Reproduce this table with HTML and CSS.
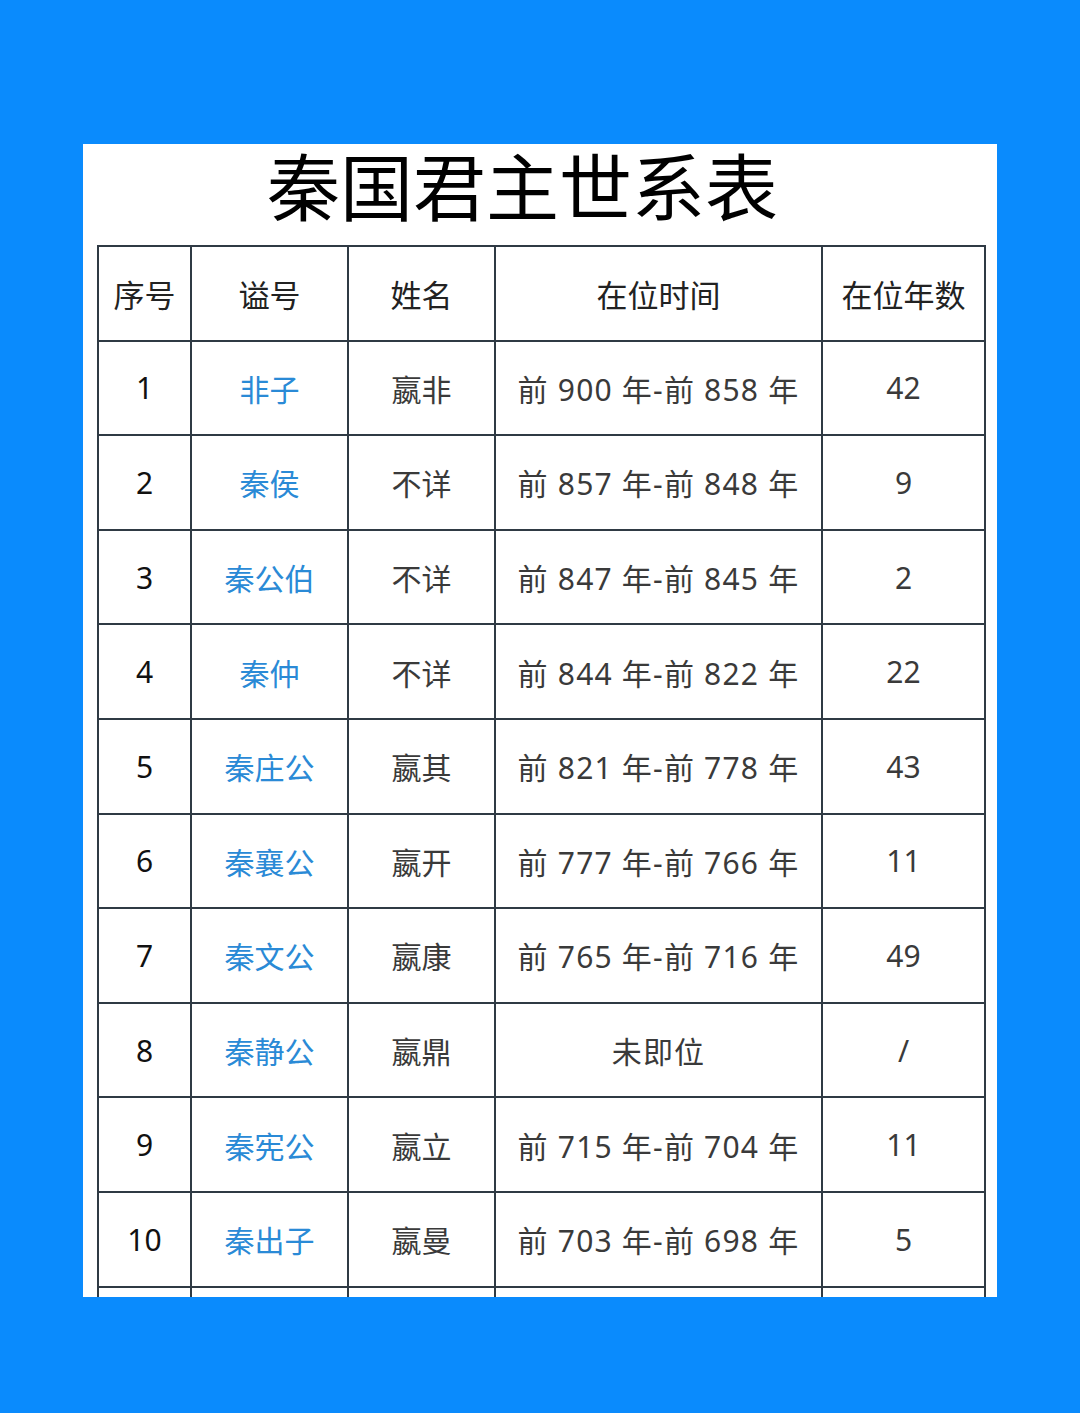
FILE: index.html
```html
<!DOCTYPE html>
<html lang="zh">
<head>
<meta charset="utf-8">
<link rel="stylesheet" href="styles.css">
</head>
<body>
<div class="panel">
  <h1 class="title">秦国君主世系表</h1>
  <table class="kings">
    <colgroup>
      <col class="c1"><col class="c2"><col class="c3"><col class="c4"><col class="c5">
    </colgroup>
    <thead>
      <tr><th>序号</th><th>谥号</th><th>姓名</th><th>在位时间</th><th>在位年数</th></tr>
    </thead>
    <tbody>
      <tr><td class="num">1</td><td class="link">非子</td><td>嬴非</td><td class="date">前 900 年-前 858 年</td><td>42</td></tr>
      <tr><td class="num">2</td><td class="link">秦侯</td><td>不详</td><td class="date">前 857 年-前 848 年</td><td>9</td></tr>
      <tr><td class="num">3</td><td class="link">秦公伯</td><td>不详</td><td class="date">前 847 年-前 845 年</td><td>2</td></tr>
      <tr><td class="num">4</td><td class="link">秦仲</td><td>不详</td><td class="date">前 844 年-前 822 年</td><td>22</td></tr>
      <tr><td class="num">5</td><td class="link">秦庄公</td><td>嬴其</td><td class="date">前 821 年-前 778 年</td><td>43</td></tr>
      <tr><td class="num">6</td><td class="link">秦襄公</td><td>嬴开</td><td class="date">前 777 年-前 766 年</td><td>11</td></tr>
      <tr><td class="num">7</td><td class="link">秦文公</td><td>嬴康</td><td class="date">前 765 年-前 716 年</td><td>49</td></tr>
      <tr><td class="num">8</td><td class="link">秦静公</td><td>嬴鼎</td><td class="date">未即位</td><td>/</td></tr>
      <tr><td class="num">9</td><td class="link">秦宪公</td><td>嬴立</td><td class="date">前 715 年-前 704 年</td><td>11</td></tr>
      <tr><td class="num">10</td><td class="link">秦出子</td><td>嬴曼</td><td class="date">前 703 年-前 698 年</td><td>5</td></tr>
      <tr><td></td><td></td><td></td><td></td><td></td></tr>
    </tbody>
  </table>
</div>
</body>
</html>
```
FILE: styles.css
```css
html, body {
  margin: 0;
  padding: 0;
}
body {
  background: #0a8bfd;
  width: 1080px;
  height: 1413px;
  padding: 144px 0 0 83px;
  box-sizing: border-box;
  font-family: "Noto Sans", "Noto Sans CJK SC", sans-serif;
}
.panel {
  width: 914px;
  height: 1153px;
  background: #ffffff;
  overflow: hidden;
  padding: 0 13px 0 14px;
  box-sizing: border-box;
}
.title {
  margin: 0;
  padding: 0 36px 23px 0;
  line-height: 78px;
  text-align: center;
  font-family: "Noto Sans CJK SC", sans-serif;
  font-weight: 400;
  font-size: 73px;
  color: #000;
}
.kings {
  width: 887px;
  border-collapse: collapse;
  table-layout: fixed;
}
.c1 { width: 93px; }
.c2 { width: 157px; }
.c3 { width: 147px; }
.c4 { width: 327px; }
.c5 { width: 163px; }
.kings th, .kings td {
  border: 2px solid #2f3a44;
  height: 92.6px;
  padding: 0;
  text-align: center;
  font-weight: 400;
  font-size: 30px;
  color: #3a3a3a;
}
.kings th {
  font-size: 31px;
  color: #222;
}
.kings td.num {
  color: #111;
}
.kings td.link {
  color: #2a8ad6;
}
.kings td.date {
  letter-spacing: 1.2px;
}
```
